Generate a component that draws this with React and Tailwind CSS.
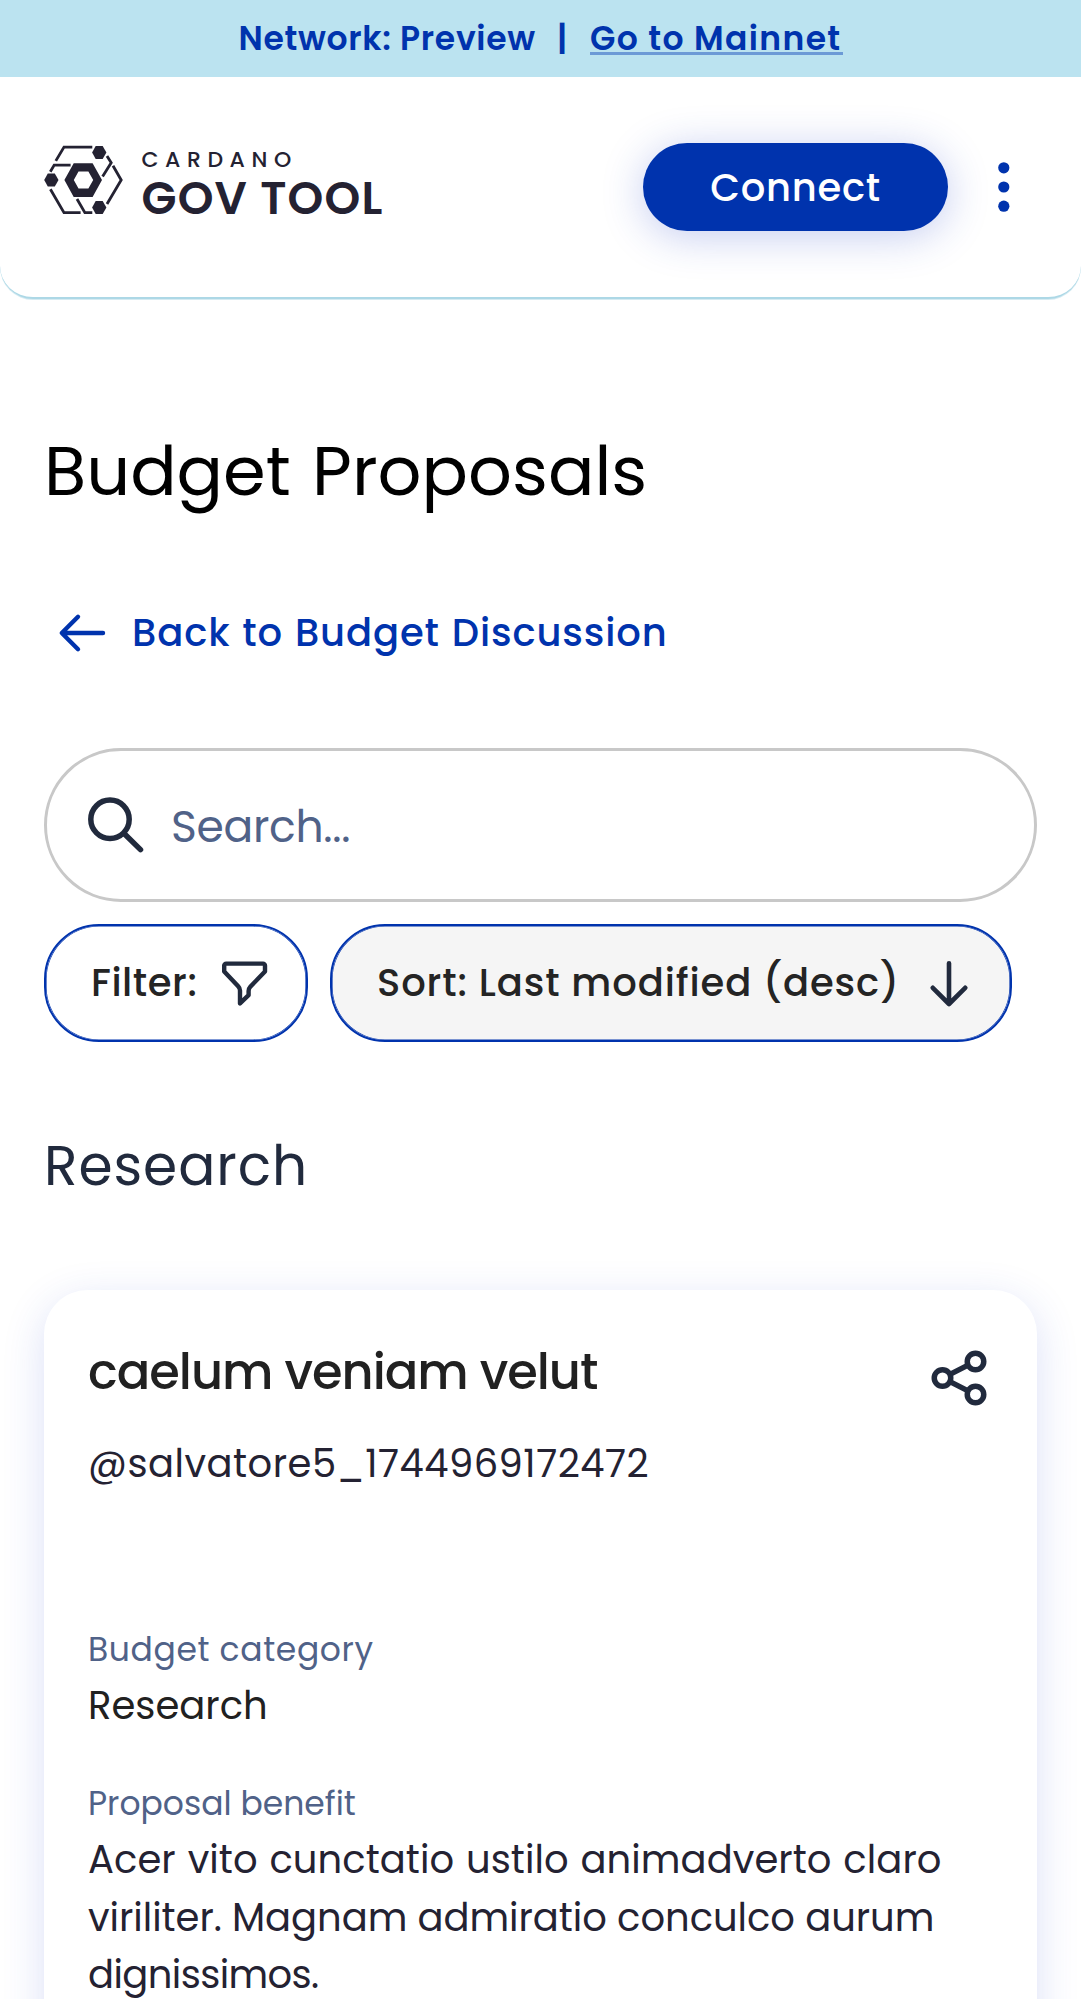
import React from "react";

function LogoMark() {
  return (
    <svg className="h-[70px] w-[79px] shrink-0" viewBox="44 145 79 70" fill="none" stroke="#242232" strokeWidth="2.8">
      <path d="M55.8 160.9 64 147.1H92.3" />
      <path d="M107 156 111.2 162.8 102.6 176.4" />
      <path d="M113 165.8 121.2 180 107 204" />
      <path d="M50.3 171.8 54.2 165.1H70.6" />
      <path d="M50.4 189.2 64 212.7H80.6" />
      <path d="M77 199 84.9 212.7H92.3" />
      <g fill="#242232" stroke="none">
        <path d="M92.1 152.4 95.7 146h7l3.7 6.4-3.7 6.5h-7Z" />
        <path d="M92.1 207.6 95.7 201.1h7l3.7 6.5-3.7 6.4h-7Z" />
        <path d="M44.2 180 47.8 173.4h7l3.7 6.6-3.7 6.6h-7Z" />
        <path fillRule="evenodd" d="M64.4 180 73.7 163.2H92.6L102 180 92.6 197H73.7ZM73.8 180 78.5 188.6H88.4L93.2 180 88.4 171.6H78.5Z" />
      </g>
    </svg>
  );
}

function Banner() {
  return (
    <div className="flex h-[77px] items-center bg-[#bbe3f0] pl-[238.5px] text-[33px] leading-[50px] font-semibold whitespace-nowrap text-[#0033ad]">
      <span className="w-[318.5px] tracking-[0.68px]">Network: Preview</span>
      <span className="w-[33px]">|</span>
      <a className="relative tracking-[1.35px]">
        Go to Mainnet
        <span className="absolute top-[38px] left-0 h-[3px] w-[253px] bg-[#6c9ad6]" />
      </a>
    </div>
  );
}

function Header() {
  return (
    <header className="flex h-[222px] items-start rounded-b-[33px] border-b-2 border-[#add8e6] bg-white pl-[44px] shadow-[0_1px_0_rgba(173,216,230,0.5)]">
      <div className="flex pt-[68px]">
        <LogoMark />
        <div className="ml-[18.5px] flex flex-col whitespace-nowrap text-[#242232]">
          <span className="h-[28px] text-[22px] leading-[29px] font-medium tracking-[6.56px]">CARDANO</span>
          <span className="h-[50px] text-[45.5px] leading-[50px] font-semibold tracking-[1.2px]">GOV TOOL</span>
        </div>
      </div>
      <button className="mt-[66px] mr-[50px] ml-auto h-[88px] w-[305px] rounded-full bg-[#0033ad] pt-[1px] text-[38.5px] leading-[58px] font-medium tracking-[0.72px] text-white shadow-[0_5.5px_41px_rgba(40,70,200,0.27)]">
        Connect
      </button>
      <svg className="mt-[82px] mr-[71px] h-[56px] w-[12px]" viewBox="0 0 12 56" fill="#0033ad">
        <circle cx="5.8" cy="8.8" r="5.6" />
        <circle cx="5.8" cy="28" r="5.6" />
        <circle cx="5.8" cy="47.2" r="5.6" />
      </svg>
    </header>
  );
}

function SearchBox() {
  return (
    <div className="mt-[83px] flex h-[154px] items-center rounded-full border-3 border-[#c8c8c8] pl-[41px]">
      <svg className="h-[58px] w-[58px]" viewBox="0 0 58 58" fill="none" stroke="#212a3d" strokeWidth="5.5" strokeLinecap="round">
        <circle cx="22" cy="23.3" r="19.2" />
        <path d="M36.6 38 52.5 53.6" />
      </svg>
      <span className="mt-[3px] ml-[25px] text-[44px] leading-[66px] tracking-[-0.3px] text-[#506288]">Search...</span>
    </div>
  );
}

function Controls() {
  return (
    <div className="mt-[22px] flex gap-[22px] text-[38.5px] leading-[58px] font-medium whitespace-nowrap text-[#242424]">
      <button className="flex h-[118px] w-[264px] items-center rounded-[55px] border-[2.75px] border-[#0033ad] pl-[45px] shadow-[inset_0_0_0_0.6px_#0033ad]">
        <span className="w-[130px] text-left tracking-[0.56px]">Filter:</span>
        <svg className="h-[48px] w-[48px]" viewBox="0 0 48 48" fill="none" stroke="#212a3d" strokeWidth="4.4" strokeLinejoin="round">
          <path d="M5.2 4.6H42a2 2 0 0 1 2 2V12.4L29.3 27.8C28.2 29 27.6 30.5 27.6 32V36.2L19 44.4V31.5C19 30 18.4 28.6 17.4 27.6L3.2 12.4V6.6a2 2 0 0 1 2-2Z" />
        </svg>
      </button>
      <button className="flex h-[118px] w-[682px] items-center rounded-[55px] border-[2.75px] border-[#0033ad] bg-[#f5f5f5] pl-[45px] shadow-[inset_0_0_0_0.6px_#0033ad]">
        <span className="w-[553px] text-left tracking-[0.9px]">Sort: Last modified (desc)</span>
        <svg className="mt-[2px] h-[48px] w-[40px]" viewBox="0 0 40 48" fill="none" stroke="#212a3d" strokeWidth="4.6" strokeLinecap="round" strokeLinejoin="round">
          <path d="M19 3.2V43.5M2.8 27.8 19 44 35.2 27.8" />
        </svg>
      </button>
    </div>
  );
}

function ProposalCard() {
  return (
    <article className="mt-[90.5px] h-[900px] rounded-[44px] bg-white px-[44px] pt-[49.5px] whitespace-nowrap shadow-[0_11px_41px_rgba(40,70,205,0.17)]">
      <div className="flex justify-between">
        <h3 className="text-[49.5px] leading-[66px] font-medium tracking-[-0.98px] text-[#212121]">caelum veniam velut</h3>
        <svg className="mt-[6px] mr-[1px] h-[66px] w-[66px]" viewBox="0 0 24 24" fill="none" stroke="#212a3d" strokeWidth="2">
          <circle cx="18" cy="6" r="3" />
          <circle cx="6" cy="12" r="3" />
          <circle cx="18" cy="18" r="3" />
          <path d="M8.7 10.7 15.3 7.3M8.7 13.3 15.3 16.7" />
        </svg>
      </div>
      <p className="mt-[24px] text-[38.5px] leading-[58px] tracking-[0.48px] text-[#242232]">@salvatore5_1744969172472</p>
      <p className="mt-[131.5px] text-[33px] leading-[50px] tracking-[0.62px] text-[#506288]">Budget category</p>
      <p className="mt-[2px] text-[38.5px] leading-[58px] text-[#212121]">Research</p>
      <p className="mt-[44px] text-[33px] leading-[50px] text-[#506288]">Proposal benefit</p>
      <p className="mt-[2.3px] text-[38.5px] leading-[57.75px] text-[#242232]">
        <span className="block tracking-[0.06px] [word-spacing:1.5px]">Acer vito cunctatio ustilo animadverto claro</span>
        <span className="block tracking-[-0.04px]">viriliter. Magnam admiratio conculco aurum</span>
        <span className="block tracking-[-0.6px]">dignissimos.</span>
      </p>
    </article>
  );
}

export default function App() {
  return (
    <div className="h-[1999px] w-[1081px] overflow-hidden bg-white font-['Poppins','Inter',sans-serif]">
      <Banner />
      <Header />
      <main className="px-[44px] pt-[131px]">
        <h1 className="text-[68.75px] leading-[82px] text-black [word-spacing:3px]">Budget Proposals</h1>
        <a className="mt-[88px] flex h-[65px] items-center pl-[14px] text-[38.5px] leading-[65px] font-medium tracking-[0.9px] text-[#0033ad] [word-spacing:1px]">
          <svg className="mr-[25px] h-[40px] w-[49px]" viewBox="0 0 49 40" fill="none" stroke="currentColor" strokeWidth="4.4" strokeLinecap="round" strokeLinejoin="round">
            <path d="M45 20H4M20 3.8 3.8 20 20 36.2" />
          </svg>
          Back to Budget Discussion
        </a>
        <SearchBox />
        <Controls />
        <h2 className="mt-[91px] text-[55px] leading-[66px] tracking-[0.95px] text-[#212a3d]">Research</h2>
        <ProposalCard />
      </main>
    </div>
  );
}
